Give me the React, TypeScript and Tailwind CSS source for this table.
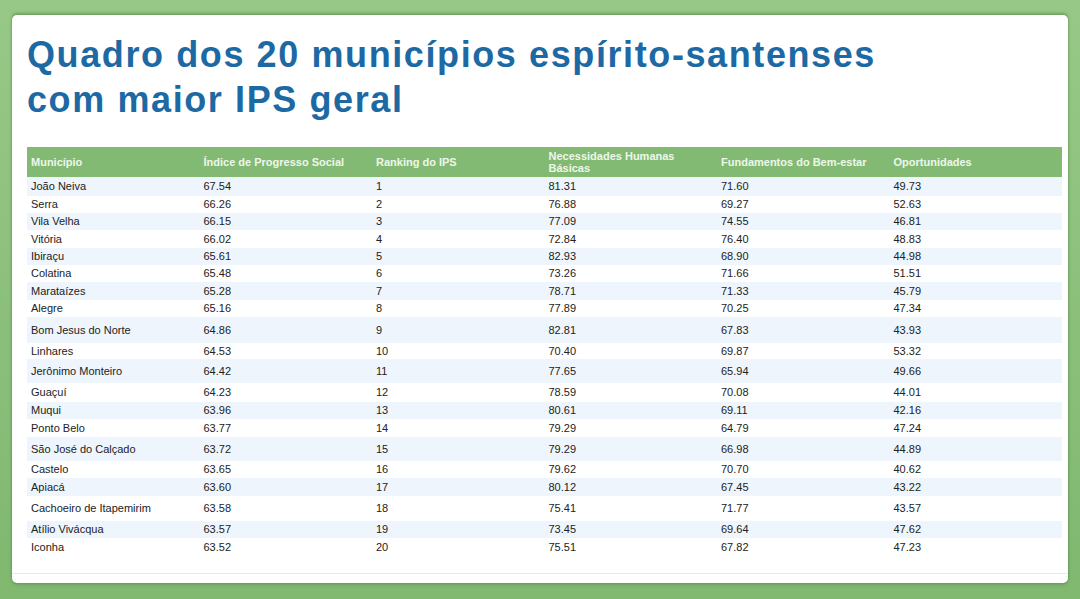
import React from "react";

const rows: [string, string, string, string, string, string, number][] = [
  ["João Neiva", "67.54", "1", "81.31", "71.60", "49.73", 19],
  ["Serra", "66.26", "2", "76.88", "69.27", "52.63", 17],
  ["Vila Velha", "66.15", "3", "77.09", "74.55", "46.81", 17],
  ["Vitória", "66.02", "4", "72.84", "76.40", "48.83", 18],
  ["Ibiraçu", "65.61", "5", "82.93", "68.90", "44.98", 17],
  ["Colatina", "65.48", "6", "73.26", "71.66", "51.51", 17],
  ["Marataízes", "65.28", "7", "78.71", "71.33", "45.79", 18],
  ["Alegre", "65.16", "8", "77.89", "70.25", "47.34", 17],
  ["Bom Jesus do Norte", "64.86", "9", "82.81", "67.83", "43.93", 26],
  ["Linhares", "64.53", "10", "70.40", "69.87", "53.32", 16],
  ["Jerônimo Monteiro", "64.42", "11", "77.65", "65.94", "49.66", 24],
  ["Guaçuí", "64.23", "12", "78.59", "70.08", "44.01", 19],
  ["Muqui", "63.96", "13", "80.61", "69.11", "42.16", 17],
  ["Ponto Belo", "63.77", "14", "79.29", "64.79", "47.24", 18],
  ["São José do Calçado", "63.72", "15", "79.29", "66.98", "44.89", 24],
  ["Castelo", "63.65", "16", "79.62", "70.70", "40.62", 17],
  ["Apiacá", "63.60", "17", "80.12", "67.45", "43.22", 18],
  ["Cachoeiro de Itapemirim", "63.58", "18", "75.41", "71.77", "43.57", 25],
  ["Atílio Vivácqua", "63.57", "19", "73.45", "69.64", "47.62", 17],
  ["Iconha", "63.52", "20", "75.51", "67.82", "47.23", 19],
];

const headers = [
  "Município",
  "Índice de Progresso Social",
  "Ranking do IPS",
  "Necessidades Humanas Básicas",
  "Fundamentos do Bem-estar",
  "Oportunidades",
];

export default function App() {
  return (
    <div
      className="w-[1080px] h-[599px] overflow-hidden bg-gradient-to-b from-[#97c887] to-[#80b870] pt-[15px] pl-[12px] pr-[12px]"
      style={{ fontFamily: '"Liberation Sans", Arial, sans-serif' }}
    >
      <div className="w-[1056px] h-[568px] bg-white rounded-[5px] shadow-[0_-2px_3px_rgba(40,90,30,0.35),0_2px_3px_rgba(40,90,30,0.25)] pt-[17px] pl-[15px] pr-[6px] flex flex-col">
        <h1 className="text-[36px] leading-[45px] font-bold text-[#1d69a3] tracking-[1.6px]">
          Quadro dos 20 municípios espírito-santenses
          <br />
          com maior IPS geral
        </h1>
        <div className="mt-[25px] w-[1035px]">
          <div className="grid grid-cols-6 h-[30px] bg-[#83ba73] items-center">
            {headers.map((h) => (
              <div
                key={h}
                className="pl-[4px] pr-[6px] text-[11px] leading-[12.5px] font-bold text-[#eef6ea]"
              >
                {h}
              </div>
            ))}
          </div>
          {rows.map((r, i) => (
            <div
              key={r[0]}
              className={`grid grid-cols-6 items-center text-[11px] text-[#222] ${
                i % 2 === 0 ? "bg-[#eef5fc]" : "bg-white"
              }`}
              style={{ height: r[6] }}
            >
              {r.slice(0, 6).map((c, j) => (
                <div key={j} className="pl-[4px]">
                  {c}
                </div>
              ))}
            </div>
          ))}
        </div>
        <div className="flex-1" />
        <div className="h-px bg-[#e6ebe6] mb-[9px] mr-[-6px] ml-[-15px]" />
      </div>
    </div>
  );
}
